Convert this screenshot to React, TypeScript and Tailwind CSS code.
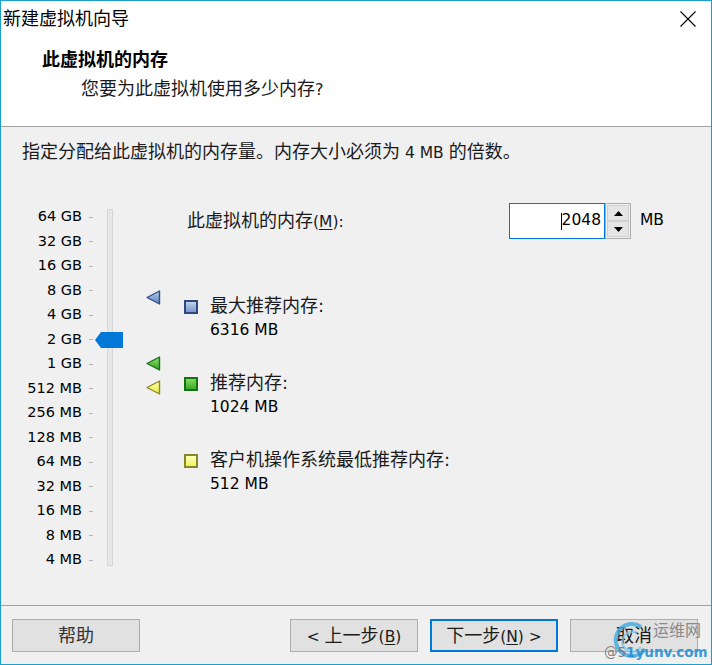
import React from "react";

const scaleLabels = [
  "64 GB",
  "32 GB",
  "16 GB",
  "8 GB",
  "4 GB",
  "2 GB",
  "1 GB",
  "512 MB",
  "256 MB",
  "128 MB",
  "64 MB",
  "32 MB",
  "16 MB",
  "8 MB",
  "4 MB",
];

const cjk = "font-['DejaVu_Sans','Noto_Sans_CJK_SC',sans-serif]";

function Marker({ id, light, dark, edge, className }: { id: string; light: string; dark: string; edge: string; className: string }) {
  return (
    <svg className={`absolute ${className}`} width="15" height="15" viewBox="0 0 15 15">
      <defs>
        <linearGradient id={id} x1="0" y1="0" x2="0" y2="1">
          <stop offset="0" stopColor={light} />
          <stop offset="1" stopColor={dark} />
        </linearGradient>
      </defs>
      <path d="M1 7.5 L13.5 1 L13.5 14 Z" fill={`url(#${id})`} stroke={edge} strokeWidth="1.4" strokeLinejoin="round" />
    </svg>
  );
}

function LegendItem({ box, title, value, className }: { box: string; title: string; value: string; className: string }) {
  return (
    <div className={`flex items-start ${className}`}>
      <div className={`w-[14px] h-[14px] mt-[6px] border-2 ${box}`} />
      <div className="ml-[12px] flex flex-col">
        <span className="leading-[24px] text-[18px] text-[#1a1a1a]">{title}</span>
        <span className="leading-[24px] text-[15.5px] text-black">{value}</span>
      </div>
    </div>
  );
}

export default function App() {
  return (
    <div className={`w-[712px] h-[665px] border border-[#1a9fcc] flex flex-col relative overflow-hidden ${cjk}`}>
      {/* header */}
      <div className="h-[126px] bg-white border-b border-[#a0a0a0] flex flex-col">
        <div className="h-[36px] flex items-center justify-between pl-[2px] pr-[15px]">
          <span className="text-[18px] leading-[24px] text-black">新建虚拟机向导</span>
          <svg width="16" height="16" viewBox="0 0 16 16">
            <path d="M0.5 0.5 L15.5 15.5 M15.5 0.5 L0.5 15.5" stroke="#000" strokeWidth="1.1" />
          </svg>
        </div>
        <div className="mt-[11px] pl-[41px] text-[18px] leading-[24px] font-bold text-black">此虚拟机的内存</div>
        <div className="mt-[5px] pl-[80px] text-[18px] leading-[24px] text-[#1a1a1a]">
          您要为此虚拟机使用多少内存<span className="text-[16px]">?</span>
        </div>
      </div>

      {/* body */}
      <div className="flex-1 bg-[#f0f0f0] flex flex-col">
        <div className="pt-[13px] pl-[21px] text-[18px] leading-[24px] text-[#1a1a1a]">
          指定分配给此虚拟机的内存量。内存大小必须为<span className="text-[15.5px]"> 4 MB </span>的倍数。
        </div>

        <div className="mt-[36px] flex relative">
          {/* slider */}
          <div className="w-[81px] pt-[4px] flex flex-col">
            {scaleLabels.map((l) => (
              <div key={l} className="h-[24.5px] flex items-center justify-end text-[14.5px] text-black">
                {l}
              </div>
            ))}
          </div>
          <div className="ml-[7px] w-[4px] pt-[4px] flex flex-col">
            {scaleLabels.map((l) => (
              <div key={l} className="h-[24.5px] flex items-center">
                <div className="w-[4px] h-px bg-[#b4b4b4]" />
              </div>
            ))}
          </div>
          <div className="ml-[14px] mt-[8px] w-[6px] h-[357px] bg-[#e7e7e7] border border-[#d6d6d6] relative">
            <svg className="absolute left-[-13px] top-[122px]" width="28" height="16" viewBox="0 0 28 16">
              <path d="M0 8 L6 0 L28 0 L28 16 L6 16 Z" fill="#0078d7" />
            </svg>
          </div>

          <Marker id="mk-blue" light="#b7cdec" dark="#5d84c0" edge="#2f4f86" className="left-[145px] top-[89px]" />
          <Marker id="mk-green" light="#8ee06a" dark="#2fa21e" edge="#18701a" className="left-[145px] top-[155px]" />
          <Marker id="mk-yellow" light="#ffffb0" dark="#e8e840" edge="#8a8a22" className="left-[145px] top-[179px]" />

          {/* right column */}
          <div className="ml-[71px] flex flex-col">
            <div className="mt-[2px] h-[36px] flex items-center">
              <span className="w-[325px] pl-[3px] text-[18px] leading-[24px] text-[#1a1a1a]">
                此虚拟机的内存<span className="text-[15.5px]">(<span className="underline underline-offset-2">M</span>):</span>
              </span>
              <div className="w-[96px] h-[36px] bg-white border border-[#0078d7] flex items-center justify-end pr-[3px] text-[15.5px] text-black">
                <span className="w-px h-[17px] bg-black" />
                <span>2048</span>
              </div>
              <div className="w-[26px] h-[36px] border border-[#adadad] bg-[#f0f0f0] flex flex-col p-px">
                <div className="flex-1 bg-[#e5e5e5] border border-[#cfcfcf] flex items-center justify-center">
                  <svg width="9" height="5" viewBox="0 0 9 5">
                    <path d="M0 5 L4.5 0 L9 5 Z" fill="#000" />
                  </svg>
                </div>
                <div className="flex-1 bg-[#e5e5e5] border border-[#cfcfcf] flex items-center justify-center">
                  <svg width="9" height="5" viewBox="0 0 9 5">
                    <path d="M0 0 L9 0 L4.5 5 Z" fill="#000" />
                  </svg>
                </div>
              </div>
              <span className="ml-[9px] text-[15.5px] text-black">MB</span>
            </div>

            <LegendItem
              className="mt-[55px]"
              box="border-[#2c4a7c] bg-linear-to-b from-[#bfd1ec] to-[#7897c9]"
              title="最大推荐内存:"
              value="6316 MB"
            />
            <LegendItem
              className="mt-[29px]"
              box="border-[#137313] bg-linear-to-b from-[#7ddc58] to-[#3cab27]"
              title="推荐内存:"
              value="1024 MB"
            />
            <LegendItem
              className="mt-[29px]"
              box="border-[#86862a] bg-linear-to-b from-[#ffffb8] to-[#f2f25a]"
              title="客户机操作系统最低推荐内存:"
              value="512 MB"
            />
          </div>
        </div>

        {/* footer */}
        <div className="mt-auto h-[59px] border-t border-[#a0a0a0] pt-[13px] pl-[11px] pr-[13px] flex items-start">
          <button className="w-[128px] h-[33px] bg-[#e1e1e1] border border-[#adadad] text-[18px] text-[#333]">
            帮助
          </button>
          <div className="ml-auto flex gap-[12px]">
            <button className="w-[128px] h-[33px] bg-[#e1e1e1] border border-[#adadad] text-[18px] text-[#1a1a1a]">
              <span className="text-[15.5px]">&lt; </span>上一步<span className="text-[15.5px]">(<span className="underline underline-offset-2">B</span>)</span>
            </button>
            <button className="w-[128px] h-[33px] bg-[#e1e1e1] border-2 border-[#0078d7] text-[18px] text-[#1a1a1a]">
              下一步<span className="text-[15.5px]">(<span className="underline underline-offset-2">N</span>) &gt;</span>
            </button>
            <button className="w-[128px] h-[33px] bg-[#e1e1e1] border border-[#adadad] text-[18px] text-[#1a1a1a]">
              取消
            </button>
          </div>
        </div>
      </div>

      {/* watermark */}
      <div className="absolute left-[602px] top-[614px] w-[104px] h-[48px] pointer-events-none">
        <svg className="absolute left-[8px] top-[6px]" width="40" height="40" viewBox="0 0 40 40">
          <path d="M30 6 A16 16 0 1 0 34 28" fill="none" stroke="#3fa9e0" strokeWidth="4" opacity="0.8" />
          <path d="M26 12 A10 10 0 1 0 30 26" fill="none" stroke="#7cc6ee" strokeWidth="2.5" opacity="0.7" />
        </svg>
        <span className="absolute left-[50px] top-[6px] text-[16px] leading-[20px] text-[#8a8a8a]">运维网</span>
        <span className="absolute left-[1px] top-[27px] text-[13.5px] leading-[20px] text-[#2a8fd0] font-bold opacity-90">
          <span className="text-[#777] font-normal">@5</span>1yunv.com
        </span>
      </div>
    </div>
  );
}
